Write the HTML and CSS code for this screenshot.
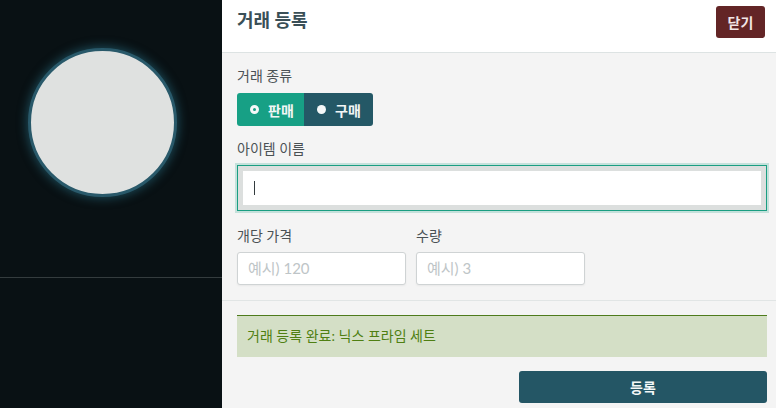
FILE: index.html
```html
<!DOCTYPE html>
<html lang="ko">
<head>
<meta charset="utf-8">
<link rel="stylesheet" href="styles.css">
</head>
<body>
<div class="app">
  <aside class="side">
    <div class="side-top">
      <div class="avatar"></div>
    </div>
    <div class="side-bottom"></div>
  </aside>
  <main class="panel">
    <header class="head">
      <h1 class="title">거래 등록</h1>
      <button class="btn-close">닫기</button>
    </header>
    <section class="form">
      <div class="label">거래 종류</div>
      <div class="toggle">
        <button class="seg seg-sell"><span class="ring"></span>판매</button>
        <button class="seg seg-buy"><span class="dot"></span>구매</button>
      </div>
      <div class="label label-item">아이템 이름</div>
      <div class="name-input"><div class="name-inner"><span class="caret"></span></div></div>
      <div class="row">
        <div class="col">
          <div class="label">개당 가격</div>
          <div class="small-input">예시) 120</div>
        </div>
        <div class="col">
          <div class="label">수량</div>
          <div class="small-input">예시) 3</div>
        </div>
      </div>
    </section>
    <section class="foot">
      <div class="alert">거래 등록 완료: 닉스 프라임 세트</div>
      <div class="actions"><button class="btn-submit">등록</button></div>
    </section>
  </main>
</div>
</body>
</html>
```

FILE: styles.css
```css
* { box-sizing: border-box; }
html, body { margin: 0; padding: 0; }
body {
  font-family: Lato, "Noto Sans CJK KR", sans-serif;
  width: 776px;
  height: 408px;
  overflow: hidden;
  background: #f4f4f4;
}
.app { display: flex; height: 408px; }
.side {
  width: 222px;
  background: #091114;
  display: flex;
  flex-direction: column;
}
.side-top {
  height: 278px;
  border-bottom: 1px solid #343c3e;
  padding: 48px 0 0 28px;
}
.avatar {
  width: 149px;
  height: 149px;
  border-radius: 50%;
  background: #dfe1e0;
  border: 3px solid #29596a;
  box-shadow: 0 0 10px 2px rgba(40, 110, 130, 0.55);
}
.side-bottom { flex: 1; }

.panel {
  flex: 1;
  display: flex;
  flex-direction: column;
  background: #f4f4f4;
}
.head {
  height: 53px;
  background: #ffffff;
  border-bottom: 1px solid #dde3e3;
  display: flex;
  justify-content: space-between;
  align-items: flex-start;
  padding: 6px 11px 0 15px;
}
.title {
  margin: 0;
  font-size: 18px;
  line-height: 28px;
  font-weight: 700;
  color: #3a4f57;
}
.btn-close {
  width: 49px;
  height: 32px;
  border: 0;
  border-radius: 3px;
  background: #632526;
  color: #f3e6e6;
  font-family: inherit;
  font-size: 14px;
  font-weight: 700;
  padding: 0;
}
.form {
  padding: 13px 9px 15px 15px;
  border-bottom: 1px solid #e1e5e5;
}
.label {
  font-size: 14px;
  line-height: 20px;
  color: #4a5154;
  margin-bottom: 7px;
}
.toggle { display: flex; }
.seg {
  height: 33px;
  border: 0;
  display: flex;
  align-items: center;
  gap: 9px;
  color: #f2f6f6;
  font-family: inherit;
  font-size: 14px;
  font-weight: 700;
  padding: 0 0 0 13px;
  white-space: nowrap;
  flex-shrink: 0;
}
.seg-sell { background: #17a085; border-radius: 3px 0 0 3px; width: 67px; }
.seg-buy { background: #245866; border-radius: 0 3px 3px 0; width: 69px; }
.ring {
  flex-shrink: 0;
  width: 9px; height: 9px; border-radius: 50%;
  border: 3px solid #f4f8f8;
  background: #17a085;
}
.dot {
  flex-shrink: 0;
  width: 9px; height: 9px; border-radius: 50%;
  background: #f4f8f8;
}
.label-item { margin-top: 13px; margin-bottom: 6px; }
.name-input {
  height: 46px;
  border: 1px solid #1a9e82;
  background: #dcdfde;
  padding: 5px;
  box-shadow: 0 0 0 2px rgba(26, 160, 130, 0.22);
}
.name-inner {
  height: 100%;
  background: #ffffff;
  padding-left: 11px;
  display: flex;
  align-items: center;
}
.caret { width: 1px; height: 14px; background: #333b3e; }
.row { display: flex; gap: 10px; margin-top: 15px; }
.col { width: 169px; }
.col .label { margin-bottom: 6px; }
.small-input {
  height: 33px;
  background: #ffffff;
  border: 1px solid #cfd3d4;
  border-radius: 3px;
  box-shadow: 0 1px 2px rgba(0, 0, 0, 0.05);
  padding-left: 10px;
  font-size: 15px;
  line-height: 31px;
  color: #bec5c7;
}
.foot { padding: 14px 9px 0 15px; }
.alert {
  height: 42px;
  background: #d4dfc6;
  border-top: 1px solid #4e7b1c;
  padding-left: 10px;
  font-size: 14px;
  line-height: 40px;
  color: #4f7f12;
  font-weight: 400;
}
.actions { display: flex; justify-content: flex-end; margin-top: 14px; }
.btn-submit {
  width: 248px;
  height: 32px;
  border: 0;
  border-radius: 3px;
  background: #245665;
  color: #f4f8f8;
  font-family: inherit;
  font-size: 14px;
  font-weight: 700;
}
```
